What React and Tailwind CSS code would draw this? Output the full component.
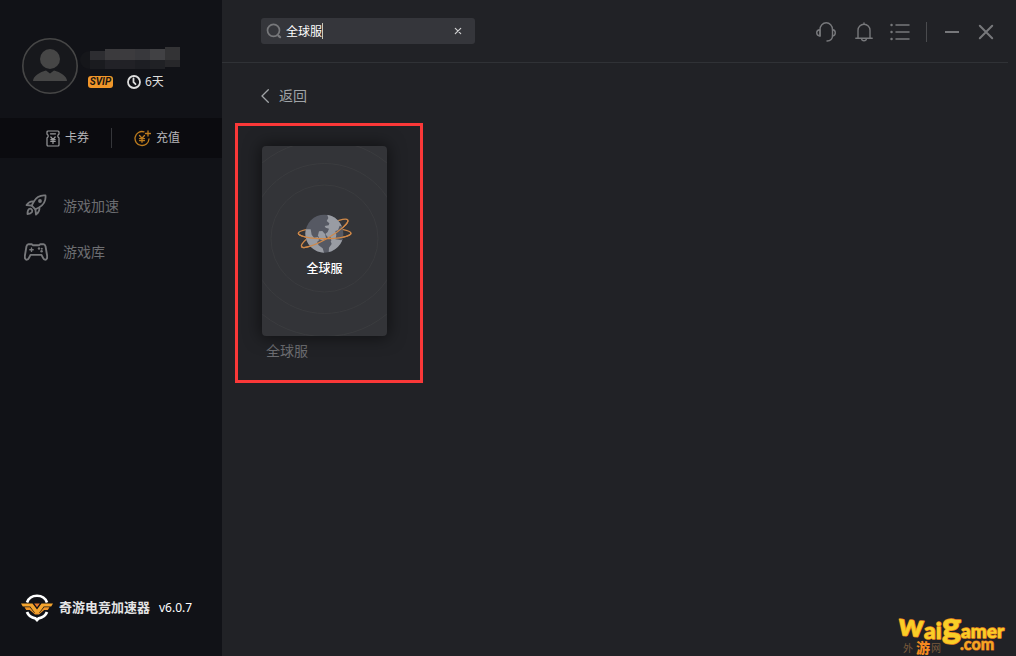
import React, { useState } from "react";

const stroke = { fill: "none", stroke: "currentColor", strokeLinecap: "round", strokeLinejoin: "round" };

function AvatarIcon() {
  return (
    <svg viewBox="0 0 56 56" className="size-14 shrink-0" aria-hidden="true">
      <circle cx="28" cy="28" r="27.2" fill="#17181c" stroke="#464646" strokeWidth="1.6" />
      <circle cx="28" cy="21" r="10" fill="#464646" />
      <path d="M11 43c0-5 7-9 13-10.5l4 3 4-3C38 34 45 38 45 43z" fill="#464646" />
    </svg>
  );
}

function MaskedName() {
  const top = ["#2d2d31", "#3b3a3d", "#3c3b3e", "#38383c", "#414144", "#333335"];
  const bottom = ["#1a1b1f", "#222227", "#212126", "#1d1e23", "#202125", "#27272a"];
  return (
    <svg viewBox="0 0 102 24" className="-ml-2 block h-6 w-[102px]" aria-hidden="true">
      <ellipse cx="9" cy="14" rx="9" ry="9" fill="#15161a" />
      <path d="M10 5h15V3h60V1h15v13H10z" fill={top[1]} />
      {top.map((c, i) => (
        <rect key={c} x={10 + i * 15} y={i === 0 ? 5 : i === 5 ? 1 : 3} width="15" height={i === 0 ? 9 : i === 5 ? 13 : 11} fill={c} />
      ))}
      {bottom.map((c, i) => (
        <rect key={c} x={10 + i * 15} y="14" width="15" height={i === 5 ? 7 : 9} fill={c} />
      ))}
    </svg>
  );
}

function ClockIcon() {
  return (
    <svg viewBox="0 0 14 14" className="size-[14px]" {...stroke} strokeWidth="1.8" aria-hidden="true">
      <circle cx="7" cy="7" r="6" />
      <path d="M6.5 3.5V7.2l2 2" />
    </svg>
  );
}

function CouponIcon() {
  return (
    <svg viewBox="0 0 14 17" className="h-[17px] w-[14px]" {...stroke} strokeWidth="1.2" aria-hidden="true">
      <path d="M2 1h10a1 1 0 0 1 1 1v2.3a1.8 1.8 0 0 0 0 3.4V15a1 1 0 0 1-1 1H2a1 1 0 0 1-1-1V7.7a1.8 1.8 0 0 0 0-3.4V2a1 1 0 0 1 1-1z" />
      <path d="M4.5 3.8h5M4.8 7 7 9.5 9.2 7M4.8 9.6h4.400M4.800 11.400h4.400M7 9.500v4" />
    </svg>
  );
}

function RechargeIcon() {
  return (
    <svg viewBox="0 0 17 17" className="size-[17px]" {...stroke} strokeWidth="1.3" aria-hidden="true">
      <path d="M10 1.8A7 7 0 1 0 15 9M14 1v5M11.5 3.5h5" />
      <path d="M5.5 5.5 8 8.3l2.5-2.8M5.5 8.6h5M5.5 10.6h5M8 8.3v4" />
    </svg>
  );
}

function RocketIcon() {
  return (
    <svg viewBox="0 0 24 24" className="size-6" {...stroke} strokeWidth="1.8" aria-hidden="true">
      <path d="M21.5 1.500c-5-.5-9.500 2-12 6.500l-1.800 3.600 3.700 3.700L15 13.500c4.500-2.500 7-7 6.500-12z" />
      <path d="M9.700 7.600C6.500 6.800 4.500 8.500 2.500 11l5.200.6M15.300 13.400c.8 3.200-.8 5.200-3.300 7.200l-.6-5.300" />
      <circle cx="16" cy="7" r="1" />
      <path d="M5 15c2-1 4 1 3 3-1 1.500-3 2-4.500 2 0-2 .2-4 1.500-5z" />
    </svg>
  );
}

function GamepadIcon() {
  return (
    <svg viewBox="0 0 24 18" className="h-[18px] w-6" {...stroke} strokeWidth="1.9" aria-hidden="true">
      <path d="M4.500 1.200h3.200l1 1h6.600l1-1h3.200c1.300 0 1.700 1 2 2l1.600 9.500c.4 2.500-.5 4-1.800 4-1.200 0-1.800-.7-2.300-1.800l-1.500-3h-11l-1.500 3C4.500 16 3.900 16.700 2.700 16.700 1.400 16.700.5 15.200.9 12.700l1.600-9.500c.3-1 .7-2 2-2z" />
      <path d="M7.500 5v3.400M5.800 6.700h3.400" strokeWidth="1.400" />
      <g fill="currentColor" stroke="none">
        <circle cx="15" cy="5.500" r="1.200" />
        <circle cx="17.800" cy="5.800" r="1" />
        <circle cx="17.600" cy="8.300" r="1.200" />
      </g>
    </svg>
  );
}

function BrandLogo() {
  return (
    <svg viewBox="0 0 32 28" className="h-7 w-8 shrink-0" aria-hidden="true">
      <path d="M6 8.500C7.500 4.300 11.300 1.800 16 1.800s8.500 2.500 10 6.700" fill="none" stroke="#fff" strokeWidth="2.600" />
      <path d="M6 18c1.500 3.600 4.600 5.800 8.300 6.300L16 26l1.700-1.700C21.400 23.800 24.500 21.600 26 18" fill="none" stroke="#fff" strokeWidth="2.800" />
      <path d="M0 9.500h11.500l4.500 6 4.500-6H32l-1.800 2.900h-7.400L18 19h-4l-4.800-6.600H1.800z" fill="#f4a42e" />
      <path d="M3.500 13.200h5.300L13.500 19h5l4.700-5.800h5.300l-1.700 2.800h-3.600L18 20.500h-4L8.800 16H5.200z" fill="#ee9428" />
      <path d="M13.200 9.500h5.600L16 13.200z" fill="#e7772b" />
    </svg>
  );
}

function SearchIcon() {
  return (
    <svg viewBox="0 0 16 16" className="size-4 shrink-0 text-[#77787b]" {...stroke} strokeWidth="1.7" aria-hidden="true">
      <circle cx="7.500" cy="7.300" r="6" />
      <path d="m12.500 12.800 1.600 1.400" strokeWidth="2.200" />
    </svg>
  );
}

function HeadsetIcon() {
  return (
    <svg viewBox="0 0 20 20" className="size-5" {...stroke} strokeWidth="1.400" aria-hidden="true">
      <path d="M4 14V7.500a6.200 6.700 0 0 1 12.500 0v6.500c0 3-2 4.800-5.500 5" />
      <path d="M4 7.800C1.800 8 .7 9.200.7 10.800S1.800 13.700 4 14zM16.500 7.800c1.800.2 2.800 1.400 2.800 3s-1 2.900-2.800 3.200" />
    </svg>
  );
}

function BellIcon() {
  return (
    <svg viewBox="0 0 18 20" className="h-5 w-[18px]" {...stroke} strokeWidth="1.400" aria-hidden="true">
      <path d="M9 1v1.300M3 16V8.300a6 6 0 0 1 12 0V16M.8 16.300h16.400M6.500 16.500c.3 3 4.700 3 5 0" />
    </svg>
  );
}

function ListIcon() {
  return (
    <svg viewBox="0 0 20 18" className="h-[18px] w-5" {...stroke} strokeWidth="1.500" aria-hidden="true">
      <path d="M6 2h13M6 9h13M6 16h13" />
      <path d="M1.500 2h.1M1.500 9h.1M1.500 16h.1" strokeWidth="2.400" />
    </svg>
  );
}

function Ripples() {
  return (
    <svg viewBox="0 0 125 190" className="absolute inset-0 size-full" fill="none" stroke="#3b3c3f" aria-hidden="true">
      <circle cx="62.500" cy="92.500" r="53.500" />
      <circle cx="62.500" cy="92.500" r="75" />
      <circle cx="62.500" cy="92.500" r="98" />
    </svg>
  );
}

function GlobeIcon() {
  return (
    <svg viewBox="36 42 168 118" className="relative w-14" aria-hidden="true">
      <defs>
        <clipPath id="globe"><circle cx="118" cy="101" r="57" /></clipPath>
      </defs>
      <g fill="none" stroke="#cf8848" strokeWidth="4">
        <ellipse cx="119" cy="100" rx="79" ry="16" />
        <ellipse cx="119" cy="100" rx="80" ry="17" transform="rotate(-30 119 100)" />
      </g>
      <circle cx="118" cy="101" r="57" fill="#565963" />
      <g clipPath="url(#globe)" fill="#999ca3">
        <path d="M126 42l4 12-5 9 8 7-2 6-12 2 3 5 10 3-4 10-7 6 6 8 10 2 2 10 12-2 3-15-3-12 8-2 5-14 10 3 1-14 12 2-14-26z" />
        <path d="M58 88h19l3 16 7 9 12-2 3 10-6 5 5 10 12 9 5 16-32-8-30-28z" />
        <path d="M102 94l10-1 8 9 3 12-10 8-10-5-4-11z" />
        <path d="M131 160l1-17 8-11-3-9 10-6 22 4 12-10-10 35-24 16z" />
      </g>
      <g fill="none" stroke="#cf8848" strokeWidth="4">
        <path d="M40 100a79 16 0 0 0 158 0" />
        <path d="M39 100a80 17 0 0 0 160 0" transform="rotate(-30 119 100)" />
      </g>
    </svg>
  );
}

function Watermark() {
  return (
    <svg viewBox="0 0 112 44" className="h-11 w-28 overflow-visible" role="img" aria-label="Waigamer.com 外游网">
      <g fontFamily="Lato, 'Noto Sans CJK SC', sans-serif" fontWeight="900" strokeLinejoin="round" paintOrder="stroke">
        <g fill="#f8ce27" stroke="#f08a1d" strokeWidth="1.500">
          <text x="0" y="24" fontSize="31" transform="rotate(5 12 20)">w</text>
          <text x="26" y="27" fontSize="23">ai</text>
          <text x="44" y="26" fontSize="36">g</text>
          <text x="63" y="26" fontSize="19">amer</text>
        </g>
        <text x="62" y="38" fontSize="16" fill="#f5a623" stroke="#c9611c" strokeWidth="1">.com</text>
        <g fontSize="10" fontWeight="400" fill="#7a5a3b">
          <text x="5" y="40">外</text>
          <text x="33" y="40">网</text>
        </g>
        <text x="18" y="41" fontSize="14" fill="#f58a1f">游</text>
      </g>
    </svg>
  );
}

const navItems = [
  { label: "游戏加速", Icon: RocketIcon },
  { label: "游戏库", Icon: GamepadIcon },
];

function Sidebar() {
  return (
    <aside className="flex w-[222px] shrink-0 flex-col bg-[#111217]">
      <div className="flex items-start px-[22px] pt-[38px] pb-6">
        <AvatarIcon />
        <div className="flex flex-col pt-2 pl-[10px]">
          <MaskedName />
          <div className="mt-1 flex h-4 items-center">
            <span className="flex h-3 w-[25px] items-center justify-center rounded-[3px] bg-[#f0962a] font-['Roboto',sans-serif] text-[10px] leading-3 font-bold text-[#1a1410] italic">SVIP</span>
            <span className="ml-[14px] flex items-center gap-1 text-xs text-[#dedede]">
              <ClockIcon />
              6天
            </span>
          </div>
        </div>
      </div>
      <div className="flex h-10 items-center bg-[#0b0b0f] text-xs text-[#b5b6b8]">
        <button type="button" className="flex h-5 flex-1 items-center justify-end gap-[5px] pr-[22px]">
          <span className="text-[#9a9b9d]"><CouponIcon /></span>
          卡券
        </button>
        <span className="h-5 w-px bg-[#35363a]" />
        <button type="button" className="flex h-5 w-[110px] items-center gap-[5px] pl-[22px]">
          <span className="text-[#bd7c1e]"><RechargeIcon /></span>
          充值
        </button>
      </div>
      <nav className="flex flex-col pt-[25px]">
        {navItems.map(({ label, Icon }) => (
          <a key={label} href="#" className="flex h-[46px] items-center gap-[15px] px-6 text-sm text-[#6c6d71]">
            <span className="text-[#77787b]"><Icon /></span>
            {label}
          </a>
        ))}
      </nav>
      <div className="mt-auto flex items-center px-[21px] pb-[34px] text-white">
        <BrandLogo />
        <span className="ml-[6px] text-[13px] font-bold text-[#e4e4e5]">奇游电竞加速器</span>
        <span className="ml-[9px] text-xs">v6.0.7</span>
      </div>
    </aside>
  );
}

function TopBar() {
  const [query, setQuery] = useState("全球服");
  return (
    <header className="mr-2 flex h-[63px] items-center border-b border-[#303236] pr-[14px] pl-[39px]">
      <div className="relative flex h-[26px] w-[214px] items-center rounded-[3px] bg-[#35363b] pr-3 pl-[5px]">
        <SearchIcon />
        <input
          type="text"
          aria-label="搜索"
          value={query}
          onChange={(e) => setQuery(e.target.value)}
          className="h-5 w-0 flex-1 bg-transparent pl-1 text-xs text-white outline-none"
        />
        {query === "全球服" && <span className="pointer-events-none absolute top-[5px] left-[61px] h-4 w-px bg-[#c9c9ba]" />}
        <button type="button" aria-label="清除" onClick={() => setQuery("")} className="text-[#d0d0d1]">
          <svg viewBox="0 0 10 10" className="size-[10px]" {...stroke} strokeWidth="1.200"><path d="m2.300 2.300 5.400 5.400M7.700 2.300 2.300 7.700" /></svg>
        </button>
      </div>
      <div className="ml-auto flex items-center pt-[2px] text-[#77787b]">
        <button type="button" aria-label="客服"><HeadsetIcon /></button>
        <button type="button" aria-label="通知" className="ml-[19px]"><BellIcon /></button>
        <button type="button" aria-label="菜单" className="ml-[17px]"><ListIcon /></button>
        <span className="ml-4 h-5 w-px bg-[#4a4b4e]" />
        <button type="button" aria-label="最小化" className="ml-[17px]">
          <svg viewBox="0 0 16 16" className="size-4" {...stroke} strokeWidth="2"><path d="M1 8h14" strokeLinecap="butt" /></svg>
        </button>
        <button type="button" aria-label="关闭" className="ml-[18px]">
          <svg viewBox="0 0 16 16" className="size-4" {...stroke} strokeWidth="2"><path d="m1.800 1.800 12.400 12.400M14.200 1.800 1.800 14.200" /></svg>
        </button>
      </div>
    </header>
  );
}

export default function App() {
  return (
    <div className="flex min-h-screen bg-[#212226] font-['Noto_Sans','Noto_Sans_CJK_SC',sans-serif]">
      <Sidebar />
      <div className="flex min-w-0 flex-1 flex-col">
        <TopBar />
        <main className="flex flex-1 flex-col items-start pt-[23px] pl-[13px]">
          <button type="button" className="ml-[26px] flex h-5 items-center gap-[10px] text-sm text-[#a0a4a7]">
            <svg viewBox="0 0 8 14" className="h-[14px] w-2" {...stroke} strokeWidth="1.300"><path d="M7.300.7 1 7l6.300 6.300" /></svg>
            返回
          </button>
          <section className="mt-[17px] border-3 border-[#fb3838] pt-5 pr-[33px] pb-[19px] pl-6">
            <a href="#" className="block">
              <div className="relative flex h-[190px] w-[125px] flex-col items-center overflow-hidden rounded bg-[#333438] pt-[68px] shadow-[0_0_16px_2px_rgba(0,0,0,0.5)]">
                <Ripples />
                <GlobeIcon />
                <span className="relative mt-2 text-xs leading-4 font-medium text-white">全球服</span>
              </div>
              <p className="mt-[5px] pl-1 text-sm leading-5 text-[#6c6d71]">全球服</p>
            </a>
          </section>
          <div className="mt-auto self-end pr-[6px]">
            <Watermark />
          </div>
        </main>
      </div>
    </div>
  );
}
